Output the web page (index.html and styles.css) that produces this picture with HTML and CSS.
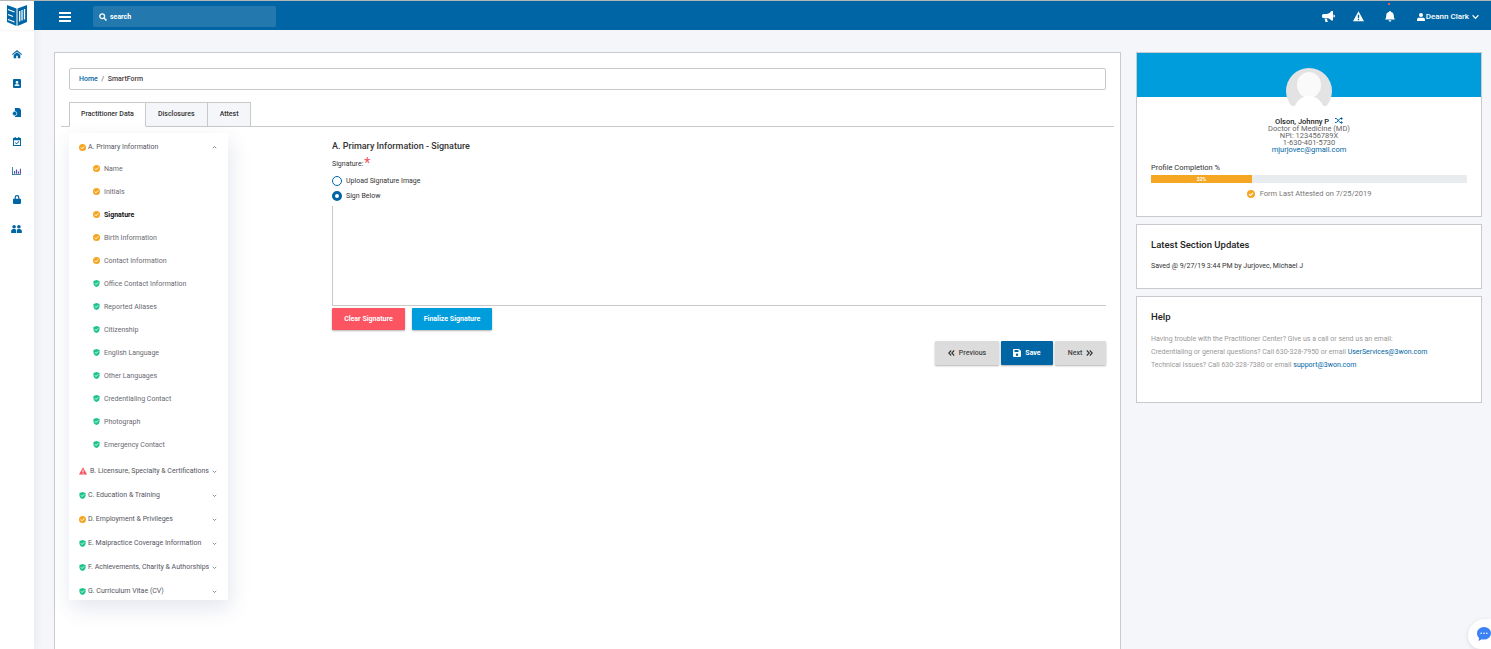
FILE: index.html
```html
<!DOCTYPE html>
<html lang="en">
<head>
    <meta charset="UTF-8">
    <title>SmartForm</title>
    <link rel="stylesheet" href="styles.css">
</head>
<body>
    <svg class="sprite" xmlns="http://www.w3.org/2000/svg">
        <symbol id="i-check" viewBox="0 0 16 16">
            <circle cx="8" cy="8" r="8" fill="#f5a623"/>
            <path d="M4 8.200l2.800 2.800L12 5.600" fill="none" stroke="#fff" stroke-width="2.200"/>
        </symbol>
        <symbol id="i-shield" viewBox="0 0 16 16">
            <path d="M8 0l7 2.400v5C15 12 12 14.800 8 16 4 14.800 1 12 1 7.400V2.400z" fill="#1cc48b"/>
            <path d="M4.400 7.600l2.600 2.600 4.800-4.800" fill="none" stroke="#fff" stroke-width="2"/>
        </symbol>
        <symbol id="i-warn" viewBox="0 0 16 16">
            <path d="M8 .5L16 15H0z" fill="currentColor"/>
            <path d="M8 5.500v5M8 11.500v2" stroke="var(--mark, #fff)" stroke-width="2"/>
        </symbol>
        <symbol id="i-down" viewBox="0 0 10 10">
            <path d="M1.500 3.500L5 7l3.500-3.500" fill="none" stroke="currentColor" stroke-width="1.300"/>
        </symbol>
    </svg>

    <aside class="sidebar">
        <div class="logo">
            <svg width="20" height="21" viewBox="0 0 20 21">
                <path d="M0 0l9.500 3.500V21L0 17z" fill="#0065a4"/>
                <path d="M20 0l-9.500 3.500V21l9.500-4z" fill="#0065a4"/>
                <path d="M1 4.500l6.500 2.500M1 9.500l5 2M1 14.500l6.500 2.500M12.700 6v10.500M15 5v10.500M17.500 4v10.500" stroke="#fff" stroke-width="1.300" fill="none"/>
            </svg>
        </div>
        <nav class="side-nav">
            <svg width="10" height="8.300" viewBox="0 0 12 10"><path d="M6 0l6 5-.8 1L6 1.800.8 6 0 5zM2 6l4-3.200L10 6v4H7V7H5v3H2z"/></svg>
            <svg width="8" height="9" viewBox="0 0 10 11"><path fill-rule="evenodd" d="M1 0h8a1 1 0 0 1 1 1v9a1 1 0 0 1-1 1H1a1 1 0 0 1-1-1V1a1 1 0 0 1 1-1zm4 2.500a1.700 1.700 0 1 0 0 3.400 1.700 1.700 0 0 0 0-3.400zM2 8.500h6C8 7 7 6.500 5 6.500S2 7 2 8.500z"/></svg>
            <svg width="9" height="9.800" viewBox="0 0 11 12"><path d="M3.500 0H9l2 2v10H3.500z"/><circle cx="3.200" cy="6.800" r="2.700" stroke="#fff" stroke-width=".8"/></svg>
            <svg width="8" height="9" viewBox="0 0 10 11"><path fill-rule="evenodd" d="M2 0h1.500v1h3V0H8v1h2v10H0V1h2zM1.200 4v5.800h7.600V4zM7.200 5l.7.700L4.400 9 2.300 7l.7-.7 1.400 1.300z"/></svg>
            <svg width="9.500" height="8" viewBox="0 0 12 10"><path d="M0 0h1v9h11v1H0z" fill="#0065a4"/><path d="M2.500 5h1.500v3.500H2.500zM5 3h1.500v5.500H5zM7.500 5.500H9v3H7.500zM10 2h1.500v6.500H10z" fill="#5b4fa8"/></svg>
            <svg width="8" height="9" viewBox="0 0 10 11"><path fill-rule="evenodd" d="M5 0a3 3 0 0 1 3 3v1.500h1a1 1 0 0 1 1 1V10a1 1 0 0 1-1 1H1a1 1 0 0 1-1-1V5.500a1 1 0 0 1 1-1h1V3a3 3 0 0 1 3-3zm0 1.500A1.500 1.500 0 0 0 3.500 3v1.500h3V3A1.500 1.500 0 0 0 5 1.500z"/></svg>
            <svg width="11" height="8" viewBox="0 0 12 9"><circle cx="3.300" cy="2" r="2"/><circle cx="8.700" cy="2" r="2"/><path d="M0 9V6.500C0 5 1.500 4.500 3.300 4.500S5.600 5 5.600 6.500V9zM6.400 9V6.500C6.400 5 7 4.500 8.700 4.500S12 5 12 6.500V9z"/></svg>
        </nav>
    </aside>

    <div class="wrap">
        <header class="topbar">
            <button class="burger"><span></span><span></span><span></span></button>
            <div class="search">
                <svg width="8" height="8" viewBox="0 0 8 8"><circle cx="3.200" cy="3.200" r="2.400" fill="none" stroke="#fff" stroke-width="1.300"/><path d="M5 5l2.500 2.500" stroke="#fff" stroke-width="1.500"/></svg>
                <span>search</span>
            </div>
            <div class="top-right">
                <svg width="13" height="11" viewBox="0 0 13 11" fill="#fff"><path d="M9.500 0L11 0v9.500H9.500C8 7.800 6 7 4.500 7H1.500A1.500 1.500 0 0 1 0 5.500v-1A1.500 1.500 0 0 1 1.500 3h3C6 3 8 1.800 9.500 0zM11.500 3.500a1.500 1.500 0 0 1 0 3zM2.500 7.500h2.300l1 3.500H3.500z"/></svg>
                <svg class="tb-warn" width="13" height="11"><use href="#i-warn"/></svg>
                <div class="bell">
                    <i class="dot"></i>
                    <svg width="10" height="11" viewBox="0 0 10 11" fill="#fff"><path d="M5 0a1 1 0 0 1 1 1c2 .4 2.800 2 2.800 3.800 0 2 .5 2.700 1.200 3.700H0c.7-1 1.200-1.700 1.200-3.700C1.200 3 2 1.400 4 1a1 1 0 0 1 1-1zM3.600 9.300h2.800a1.400 1.400 0 0 1-2.800 0z"/></svg>
                </div>
                <div class="user">
                    <svg width="8" height="8" viewBox="0 0 8 8" fill="#fff"><circle cx="4" cy="2" r="2"/><path d="M0 8V6.500C0 5.300 1 4.700 2 4.700h4c1 0 2 .6 2 1.800V8z"/></svg>
                    <span>Deann Clark</span>
                    <svg width="7" height="6" viewBox="0 0 8 6"><path d="M.7 1l3.300 3.500L7.300 1" fill="none" stroke="#fff" stroke-width="1.300"/></svg>
                </div>
            </div>
        </header>

        <div class="content">
            <main class="main-card">
                <div class="crumbs"><a>Home</a><span class="sep">/</span><span>SmartForm</span></div>

                <ul class="tabs">
                    <li class="tab active">Practitioner Data</li>
                    <li class="tab">Disclosures</li>
                    <li class="tab">Attest</li>
                </ul>

                <div class="form-row">
                    <div class="menu">
                        <div class="menu-head first">
                            <svg class="ic"><use href="#i-check"/></svg>
                            <span>A. Primary Information</span>
                            <svg class="chev up"><use href="#i-down"/></svg>
                        </div>
                        <div class="menu-sub"><svg class="ic"><use href="#i-check"/></svg>Name</div>
                        <div class="menu-sub"><svg class="ic"><use href="#i-check"/></svg>Initials</div>
                        <div class="menu-sub current"><svg class="ic"><use href="#i-check"/></svg>Signature</div>
                        <div class="menu-sub"><svg class="ic"><use href="#i-check"/></svg>Birth Information</div>
                        <div class="menu-sub"><svg class="ic"><use href="#i-check"/></svg>Contact Information</div>
                        <div class="menu-sub"><svg class="ic"><use href="#i-shield"/></svg>Office Contact Information</div>
                        <div class="menu-sub"><svg class="ic"><use href="#i-shield"/></svg>Reported Aliases</div>
                        <div class="menu-sub"><svg class="ic"><use href="#i-shield"/></svg>Citizenship</div>
                        <div class="menu-sub"><svg class="ic"><use href="#i-shield"/></svg>English Language</div>
                        <div class="menu-sub"><svg class="ic"><use href="#i-shield"/></svg>Other Languages</div>
                        <div class="menu-sub"><svg class="ic"><use href="#i-shield"/></svg>Credentialing Contact</div>
                        <div class="menu-sub"><svg class="ic"><use href="#i-shield"/></svg>Photograph</div>
                        <div class="menu-sub"><svg class="ic"><use href="#i-shield"/></svg>Emergency Contact</div>
                        <div class="menu-head gap">
                            <svg class="ic red"><use href="#i-warn"/></svg>
                            <span>B. Licensure, Specialty &amp; Certifications</span>
                            <svg class="chev"><use href="#i-down"/></svg>
                        </div>
                        <div class="menu-head">
                            <svg class="ic"><use href="#i-shield"/></svg>
                            <span>C. Education &amp; Training</span>
                            <svg class="chev"><use href="#i-down"/></svg>
                        </div>
                        <div class="menu-head">
                            <svg class="ic"><use href="#i-check"/></svg>
                            <span>D. Employment &amp; Privileges</span>
                            <svg class="chev"><use href="#i-down"/></svg>
                        </div>
                        <div class="menu-head">
                            <svg class="ic"><use href="#i-shield"/></svg>
                            <span>E. Malpractice Coverage Information</span>
                            <svg class="chev"><use href="#i-down"/></svg>
                        </div>
                        <div class="menu-head">
                            <svg class="ic"><use href="#i-shield"/></svg>
                            <span>F. Achievements, Charity &amp; Authorships</span>
                            <svg class="chev"><use href="#i-down"/></svg>
                        </div>
                        <div class="menu-head">
                            <svg class="ic"><use href="#i-shield"/></svg>
                            <span>G. Curriculum Vitae (CV)</span>
                            <svg class="chev"><use href="#i-down"/></svg>
                        </div>
                    </div>

                    <section class="sign-form">
                        <h2>A. Primary Information - Signature</h2>
                        <div class="sign-label">Signature:<span class="req">*</span></div>
                        <label class="radio"><i class="dot-off"></i>Upload Signature Image</label>
                        <label class="radio"><i class="dot-on"></i>Sign Below</label>
                        <div class="sign-pad"></div>
                        <div class="sign-actions">
                            <button class="btn btn-red">Clear Signature</button>
                            <button class="btn btn-sky">Finalize Signature</button>
                        </div>
                        <div class="pager">
                            <button class="btn btn-grey prev">
                                <svg width="7" height="6" viewBox="0 0 7 6"><path d="M3.200.5L.8 3l2.400 2.500M6.200.5L3.800 3l2.400 2.500" fill="none" stroke="#333" stroke-width="1.100"/></svg>
                                Previous
                            </button>
                            <button class="btn btn-blue save">
                                <svg width="8" height="8" viewBox="0 0 8 8"><path fill-rule="evenodd" d="M1 0h5l2 2v5a1 1 0 0 1-1 1H1a1 1 0 0 1-1-1V1a1 1 0 0 1 1-1zm.5 1v2h4V1zM4 4.500a1.200 1.200 0 1 0 0 2.400 1.200 1.200 0 0 0 0-2.400z" fill="#fff"/></svg>
                                Save
                            </button>
                            <button class="btn btn-grey next">
                                Next
                                <svg width="7" height="6" viewBox="0 0 7 6"><path d="M.8.500L3.200 3 .8 5.500M3.800.5L6.200 3 3.800 5.500" fill="none" stroke="#333" stroke-width="1.100"/></svg>
                            </button>
                        </div>
                    </section>
                </div>
            </main>

            <div class="side-col">
                <div class="card profile">
                    <div class="profile-band"></div>
                    <div class="avatar">
                        <svg width="46" height="46" viewBox="0 0 46 46">
                            <circle cx="23" cy="23" r="23" fill="#e3e3e3"/>
                            <ellipse cx="23" cy="17" rx="12" ry="13" fill="#fafafa"/>
                            <path d="M7 46C8 33 16 28 23 28s15 5 16 18z" fill="#ffffff"/>
                        </svg>
                    </div>
                    <div class="profile-info">
                        <div class="pr-name">Olson, Johnny P
                            <svg width="8" height="7" viewBox="0 0 8 7"><path d="M0 1.500h1.500l3.500 4h1.500M0 5.500h1.500l3.500-4h1.500" fill="none" stroke="#0065a4" stroke-width="1"/><path d="M6 0l2 1.500L6 3zM6 4l2 1.500L6 7z" fill="#0065a4"/></svg>
                        </div>
                        <div>Doctor of Medicine (MD)</div>
                        <div>NPI: 123456789X</div>
                        <div>1-630-401-5730</div>
                        <a>mjurjovec@gmail.com</a>
                    </div>
                    <div class="completion">
                        <div class="comp-label">Profile Completion %</div>
                        <div class="bar"><div class="bar-fill" style="width: 32%">32%</div></div>
                        <div class="attested"><svg class="ic"><use href="#i-check"/></svg>Form Last Attested on 7/25/2019</div>
                    </div>
                </div>

                <div class="card updates">
                    <h3>Latest Section Updates</h3>
                    <p>Saved @ 9/27/19 3:44 PM by Jurjovec, Michael J</p>
                </div>

                <div class="card help">
                    <h3>Help</h3>
                    <p>Having trouble with the Practitioner Center? Give us a call or send us an email:</p>
                    <p>Credentialing or general questions? Call 630-328-7950 or email <a>UserServices@3won.com</a></p>
                    <p>Technical Issues? Call 630-328-7380 or email <a>support@3won.com</a></p>
                </div>
            </div>
        </div>
    </div>

    <!-- chat bubble sits over the page corner -->
    <div class="chat">
        <svg width="14" height="14" viewBox="0 0 14 14"><path d="M7 0a7 6.300 0 0 1 0 12.600c-.8 0-1.500-.1-2.200-.3L1.500 14l.6-3C.8 9.900 0 8.200 0 6.300A7 6.300 0 0 1 7 0z" fill="#3b82f6"/><circle cx="4.200" cy="6.300" r=".8" fill="#fff"/><circle cx="7" cy="6.300" r=".8" fill="#fff"/><circle cx="9.800" cy="6.300" r=".8" fill="#fff"/></svg>
    </div>
</body>
</html>
```

FILE: styles.css
```css
* {
    box-sizing: border-box;
}

html, body {
    height: 649px;
    overflow: hidden;
}

body {
    margin: 0;
    display: flex;
    font-family: Roboto, "Liberation Sans", sans-serif;
    font-size: 7px;
    color: #555;
    background-color: #f5f6fa;
    border-top: 1px solid #b5b5b5;
}

.sprite {
    display: none;
}

a {
    color: #0065a4;
}

/* Barra lateral */
.sidebar {
    width: 34px;
    flex-shrink: 0;
    background-color: #ffffff;
    box-shadow: 2px 0 8px rgba(30, 40, 90, 0.06);
}

.logo {
    height: 29px;
    padding: 4px 0 0 7px;
    box-shadow: 0 1px 2px rgba(0, 0, 0, 0.05);
}

.side-nav {
    display: grid;
    grid-auto-rows: 29px;
    justify-items: center;
    align-items: center;
    padding: 10px 1px 0 0;
    fill: #0065a4;
}

/* Topo */
.wrap {
    flex: 1;
    min-width: 0;
}

.topbar {
    height: 29px;
    display: flex;
    align-items: center;
    background-color: #0065a4;
    padding: 2px 12px 0 25px;
}

.burger {
    width: 12px;
    display: flex;
    flex-direction: column;
    gap: 2px;
    padding: 0;
    border: none;
    background: none;
}

.burger span {
    height: 2px;
    background-color: #fff;
}

.search {
    width: 183px;
    height: 21px;
    margin-left: 22px;
    padding-left: 6px;
    display: flex;
    align-items: center;
    gap: 3px;
    border-radius: 2px;
    background-color: #2379ae;
    color: #fff;
    font-size: 7px;
    font-weight: 700;
}

.top-right {
    margin-left: auto;
    display: flex;
    align-items: center;
    color: #fff;
}

.tb-warn {
    margin-left: 17px;
    color: #fff;
    --mark: #0065a4;
}

.bell {
    position: relative;
    margin-left: 20px;
    height: 11px;
}

.bell svg {
    display: block;
}

.bell .dot {
    position: absolute;
    left: 3px;
    top: -8px;
    width: 2px;
    height: 2px;
    background-color: #f4505f;
}

.user {
    margin-left: 22px;
    display: flex;
    align-items: center;
    gap: 1px;
    font-size: 8px;
    font-weight: 500;
}

.user svg:last-child {
    margin-left: 2px;
}

/* Conteudo */
.content {
    display: flex;
    align-items: flex-start;
    padding: 22px 9px 0 20px;
    gap: 15px;
}

.main-card {
    width: 1067px;
    height: 597px;
    flex-shrink: 0;
    padding: 15px 6px 0;
    background-color: #ffffff;
    border: 1px solid #c9c9cf;
    border-bottom: none;
}

.crumbs {
    margin: 0 8px;
    height: 22px;
    padding-left: 9px;
    display: flex;
    align-items: center;
    gap: 3.500px;
    border: 1px solid #c9c9c9;
    border-radius: 2px;
    color: #4a3a40;
    font-weight: 500;
}

.crumbs .sep {
    color: #555;
    font-weight: 400;
}

.tabs {
    list-style: none;
    margin: 12px 0 0;
    padding: 0 0 0 8px;
    height: 25px;
    display: flex;
    border-bottom: 1px solid #c9c9c9;
}

.tab {
    height: 25px;
    padding: 0 12px 2px;
    display: flex;
    align-items: center;
    border: 1px solid #c9c9c9;
    border-left-width: 0;
    background-color: #f5f6fa;
    color: #333;
    font-weight: 500;
}

.tab:first-child {
    width: 77px;
    padding: 0 11px 2px;
    border-left-width: 1px;
}

.tab:last-child {
    padding-right: 11px;
}

.tab.active {
    background-color: #ffffff;
    border-bottom-color: #ffffff;
}

.form-row {
    display: flex;
    align-items: flex-start;
    padding-left: 8px;
}

.menu {
    width: 159px;
    margin-top: 6px;
    padding: 4px 0 0;
    flex-shrink: 0;
    height: 467px;
    background-color: #ffffff;
    box-shadow: 2px 8px 20px rgba(50, 60, 120, 0.13);
}

.menu-head {
    height: 24px;
    display: flex;
    align-items: center;
    padding: 0 11px 0 10px;
    color: #55555f;
    white-space: nowrap;
}

.menu-head.first {
    height: 20px;
}

.menu-head.gap {
    margin-top: 3px;
}

.menu-head span {
    flex: 1;
    margin-left: 2px;
}

.menu-sub {
    height: 23px;
    display: flex;
    align-items: center;
    padding-left: 24px;
    color: #6a6a72;
    white-space: nowrap;
}

.menu-sub .ic {
    margin-right: 4px;
}

.menu-sub.current {
    color: #111;
    font-weight: 700;
}

.ic {
    width: 7px;
    height: 7px;
    flex-shrink: 0;
}

.ic.red {
    width: 10px;
    height: 8px;
    margin-left: -1px;
    color: #f4505f;
}

.chev {
    width: 5px;
    height: 5px;
    flex-shrink: 0;
    color: #555;
}

.chev.up {
    transform: rotate(180deg);
}

/* Formulario de assinatura */
.sign-form {
    flex: 1;
    padding-left: 104px;
    margin-right: 8px;
}

.sign-form h2 {
    margin: 13px 0 0;
    font-size: 9px;
    line-height: 12px;
    font-weight: 500;
    color: #333;
}

.sign-label {
    margin-top: 8px;
    height: 11px;
    display: flex;
    color: #333;
}

.req {
    margin: -3px 0 0 1px;
    color: #f4505f;
    font-size: 14px;
    line-height: 13px;
}

.radio {
    height: 15px;
    display: flex;
    align-items: center;
    gap: 4px;
    color: #333;
}

.sign-label + .radio {
    margin-top: 2px;
}

.dot-off, .dot-on {
    width: 10px;
    height: 10px;
    border-radius: 50%;
    border: 1px solid #0065a4;
    background-color: #fff;
}

.dot-on {
    border: 3px solid #0065a4;
}

.sign-pad {
    height: 100px;
    margin-top: 3px;
    border-left: 1px solid #c9c9c9;
    border-bottom: 1px solid #c9c9c9;
}

.sign-actions {
    display: flex;
    gap: 7px;
    margin-top: 2px;
}

.btn {
    height: 22px;
    padding: 0;
    border: none;
    border-radius: 1px;
    font-family: inherit;
    font-size: 7px;
    font-weight: 700;
    color: #fff;
    display: flex;
    align-items: center;
    justify-content: center;
    gap: 4px;
    box-shadow: 0 1px 2px rgba(0, 0, 0, 0.3);
}

.btn-red {
    width: 73px;
    background-color: #fc5561;
}

.btn-sky {
    width: 80px;
    background-color: #009ddc;
}

.pager {
    display: flex;
    justify-content: flex-end;
    gap: 2px;
    margin-top: 11px;
}

.pager .btn {
    height: 24px;
}

.btn-grey {
    background-color: #dcdcdc;
    color: #444;
    font-weight: 500;
}

.btn-blue {
    background-color: #0065a4;
}

.prev {
    width: 64px;
}

.save {
    width: 52px;
}

.next {
    width: 51px;
}

/* Coluna direita */
.side-col {
    width: 346px;
    display: flex;
    flex-direction: column;
    gap: 7px;
}

.card {
    background-color: #ffffff;
    border: 1px solid #c9c9cf;
}

.profile {
    position: relative;
    height: 165px;
}

.profile-band {
    height: 44px;
    background-color: #009ddc;
}

.avatar {
    position: absolute;
    left: 149px;
    top: 15px;
    width: 46px;
    height: 38px;
    overflow: hidden;
}

.profile-info {
    margin-top: 20px;
    text-align: center;
    font-size: 7.500px;
    line-height: 7px;
    color: #666;
}

.pr-name {
    color: #222;
    font-weight: 500;
}

.pr-name svg {
    margin-left: 4px;
}

.completion {
    padding: 0 14px;
    margin-top: 9px;
}

.comp-label {
    font-size: 7.500px;
    line-height: 12px;
    color: #333;
}

.bar {
    height: 8px;
    margin-top: 1px;
    border-radius: 1px;
    background-color: #e9ecef;
}

.bar-fill {
    height: 8px;
    background-color: #f5a623;
    color: #fff;
    font-size: 5px;
    font-weight: 700;
    line-height: 8px;
    text-align: center;
}

.attested {
    margin-top: 6px;
    display: flex;
    justify-content: center;
    align-items: center;
    gap: 5px;
    font-size: 7.500px;
    line-height: 10px;
    color: #777;
}

.attested .ic {
    width: 8px;
    height: 8px;
}

.updates {
    height: 65px;
    padding: 14px 14px 0;
}

.help {
    height: 107px;
    padding: 14px 14px 0;
}

.card h3 {
    margin: 0;
    font-size: 9.500px;
    line-height: 12px;
    font-weight: 500;
    color: #222;
}

.updates p {
    margin: 11px 0 0;
    color: #333;
}

.help p {
    margin: 0;
    line-height: 13px;
    color: #999;
}

.help h3 {
    margin-bottom: 10px;
}

/* Balao de chat */
.chat {
    position: absolute;
    right: 0;
    bottom: 0;
    width: 23px;
    height: 30px;
    padding: 8px 0 0 9px;
    border-radius: 18px 0 0 14px;
    background-color: #ffffff;
    box-shadow: 0 1px 4px rgba(0, 0, 0, 0.12);
}
```
